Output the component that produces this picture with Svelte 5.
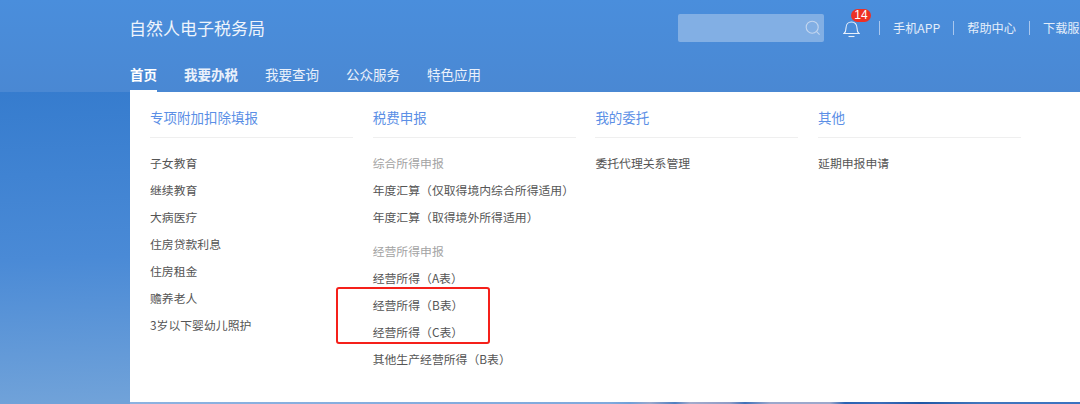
<script>
  const nav = ['首页', '我要办税', '我要查询', '公众服务', '特色应用'];
  const links = ['手机APP', '帮助中心', '下载服务'];

  const columns = [
    {
      title: '专项附加扣除填报',
      items: [
        { text: '子女教育' },
        { text: '继续教育' },
        { text: '大病医疗' },
        { text: '住房贷款利息' },
        { text: '住房租金' },
        { text: '赡养老人' },
        { text: '3岁以下婴幼儿照护' }
      ]
    },
    {
      title: '税费申报',
      marked: true,
      items: [
        { text: '综合所得申报', group: true },
        { text: '年度汇算（仅取得境内综合所得适用）' },
        { text: '年度汇算（取得境外所得适用）' },
        { text: '经营所得申报', group: true },
        { text: '经营所得（A表）' },
        { text: '经营所得（B表）' },
        { text: '经营所得（C表）' },
        { text: '其他生产经营所得（B表）' }
      ]
    },
    { title: '我的委托', items: [{ text: '委托代理关系管理' }] },
    { title: '其他', items: [{ text: '延期申报申请' }] }
  ];
</script>

<div class="page">
  <header class="header">
    <div class="top">
      <div class="brand">自然人电子税务局</div>
      <div class="tools">
        <div class="search">
          <svg width="16" height="16" viewBox="0 0 16 16" fill="none" stroke="#c3d6ef" stroke-width="1.1">
            <circle cx="7.2" cy="7.2" r="6" />
            <path d="M11.6 11.6 14.6 14.6" />
          </svg>
        </div>
        <div class="bell">
          <svg width="17" height="20" viewBox="0 0 17 20" fill="none" stroke="#e8f0fb" stroke-width="1.1">
            <path d="M1 15.5h15c-1.6-1.3-2-2.6-2-5.5 0-3.600-2.200-6-5.500-6S3 6.400 3 10c0 2.900-.4 4.200-2 5.500Z" />
            <path d="M5.500 18.500h6" />
          </svg>
          <span class="badge">14</span>
        </div>
        {#each links as link}
          <span class="sep"></span>
          <span class="link">{link}</span>
        {/each}
      </div>
    </div>
    <nav class="nav">
      {#each nav as item, i}
        <span class="nav-item" class:active={i === 0} class:bold={i === 1}>{item}</span>
      {/each}
    </nav>
  </header>

  <div class="panel">
    {#each columns as col}
      <section class="col">
        <h3>{col.title}</h3>
        <ul>
          {#each col.items as item}
            <li class:group={item.group}>{item.text}</li>
          {/each}
        </ul>
        {#if col.marked}
          <div class="mark"></div>
        {/if}
      </section>
    {/each}
  </div>

  <div class="strip"></div>
</div>

<style>
  :global(body) {
    margin: 0;
  }

  .page {
    width: 1080px;
    height: 404px;
    overflow: hidden;
    font-family: "Noto Sans CJK SC", "Liberation Sans", sans-serif;
    background: linear-gradient(178deg, #367cce 92px, #4a8ad6 260px, #70a2d9 404px);
  }

  .header {
    height: 92px;
    box-sizing: border-box;
    padding-left: 130px;
    background: linear-gradient(180deg, #4a8edc 0%, #4a88d3 100%);
    color: #fff;
  }

  .top {
    height: 64px;
    display: flex;
    align-items: center;
    justify-content: space-between;
  }

  .brand {
    font-size: 17px;
    line-height: 20px;
    color: #eef4fc;
    margin-top: -8px;
    margin-left: -1px;
  }

  .tools {
    display: flex;
    align-items: center;
    margin-top: -8px;
    white-space: nowrap;
    width: 402px;
    flex: none;
  }

  .search {
    width: 146px;
    height: 28px;
    flex: none;
    box-sizing: border-box;
    display: flex;
    align-items: center;
    justify-content: flex-end;
    padding-right: 3px;
    border-radius: 2px;
    background: #82afe4;
  }

  .bell {
    position: relative;
    width: 17px;
    height: 20px;
    margin-left: 19px;
    margin-right: 19px;
    flex: none;
  }

  .badge {
    position: absolute;
    left: 8px;
    top: -9px;
    width: 20px;
    height: 13px;
    border-radius: 7px;
    background: #ee3024;
    color: #fff;
    font: 12px/13px "Liberation Sans", sans-serif;
    text-align: center;
  }

  .sep {
    width: 1px;
    height: 14px;
    flex: none;
    background: #a9c7ee;
  }

  .link {
    font-size: 12.200px;
    line-height: 16px;
    color: #e3edfa;
    margin: 0 13px;
    flex: none;
  }

  .nav {
    height: 28px;
    display: flex;
    gap: 27px;
  }

  .nav-item {
    height: 26px;
    font-size: 13.500px;
    line-height: 20px;
    color: #eaf1fb;
  }

  .bold {
    font-weight: 700;
  }

  .active {
    font-weight: 700;
    color: #fff;
    border-bottom: 2px solid #fff;
  }

  .panel {
    height: 310px;
    box-sizing: border-box;
    margin-left: 130px;
    padding: 15px 0 0 20px;
    display: grid;
    grid-template-columns: repeat(4, 203px);
    column-gap: 19.700px;
    background: #fff;
  }

  .col {
    position: relative;
    min-width: 0;
  }

  h3 {
    margin: 0;
    height: 30px;
    border-bottom: 1px solid #efefef;
    font-size: 13.500px;
    font-weight: 400;
    line-height: 20px;
    color: #5b8fe6;
  }

  ul {
    list-style: none;
    margin: 0;
    padding: 11px 0 0;
  }

  li {
    height: 27px;
    font-size: 11.850px;
    line-height: 27px;
    color: #555;
    white-space: nowrap;
  }

  li.group {
    color: #a3a3a3;
  }

  li.group:not(:first-child) {
    margin-top: 7px;
  }

  .mark {
    position: absolute;
    left: -37px;
    top: 180px;
    width: 150px;
    height: 53px;
    border: 2px solid #f5201a;
    border-radius: 3px;
  }

  .strip {
    height: 2px;
    margin-left: 130px;
    background: linear-gradient(90deg, #8cb2e0 0, #7fa9dc 480px, #6f9fd8 500px, #9aa8cc 520px, #4f7fc0 545px, #a3abcc 560px, #8e9cc6 600px, #3f70b8 615px, #9ba8cc 640px, #9ca8cc 700px, #2a62b2 715px, #3a6cb8 750px, #1f56a4 790px, #4276bc 850px, #3a72c0 950px);
  }
</style>
